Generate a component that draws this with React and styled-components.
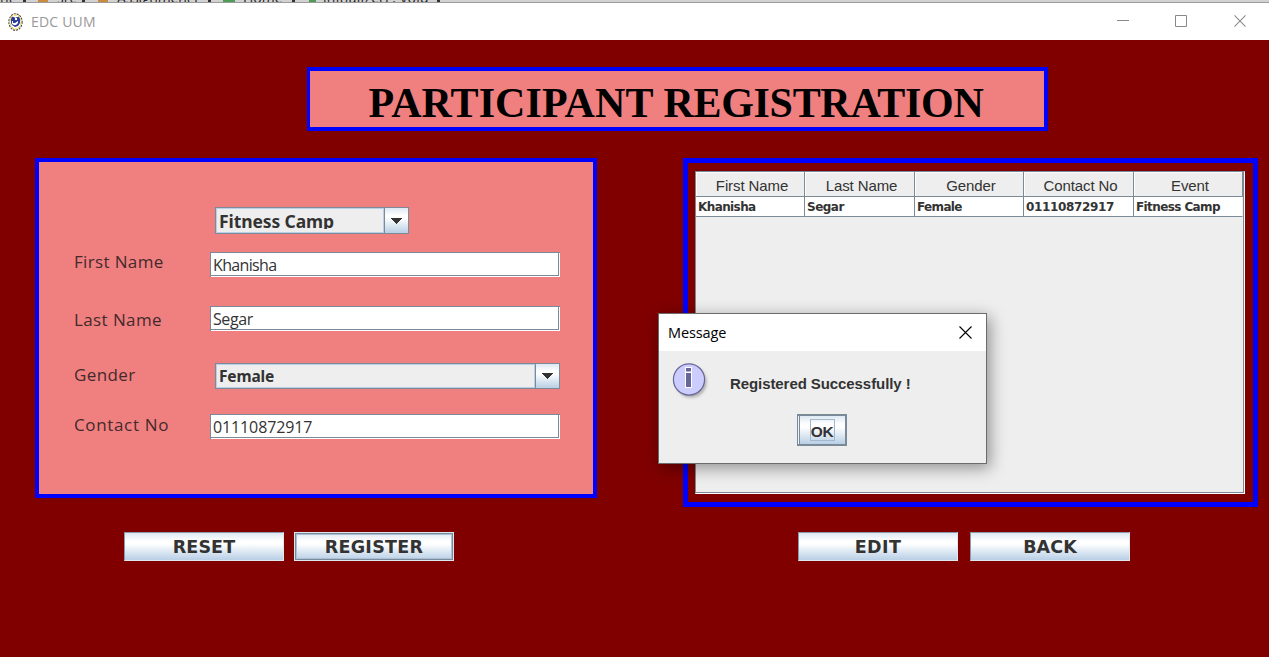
import React from "react";
import styled, { createGlobalStyle, css } from "styled-components";

const Global = createGlobalStyle`
  * { box-sizing: border-box; }
  body { margin: 0; overflow: hidden; background: #800000; }
`;

const ui = `"Open Sans", "Noto Sans", sans-serif`;
const arial = `"Liberation Sans", Arial, sans-serif`;
const bold = `"Noto Sans", Tahoma, sans-serif`;
const verdana = `"DejaVu Sans", Verdana, sans-serif`;

const Window = styled.div`
  width: 1269px;
  height: 657px;
  display: flex;
  flex-direction: column;
  background: #800000;
  color: #333;
  overflow: hidden;
  position: relative;
`;

const Breadcrumb = styled.div`
  height: 3px;
  flex: none;
  display: flex;
  align-items: flex-end;
  overflow: hidden;
  background: #d2d2d2;
  border-bottom: 1px solid #9c9c9c;
`;

const Crumb = styled.span`
  flex: none;
  width: ${(p) => p.$w}px;
  margin-left: ${(p) => p.$gap || 0}px;
  font: 14px/14px ${ui};
  height: 11px;
  color: #222;
  white-space: nowrap;
  letter-spacing: ${(p) => p.$ls || 0}px;
`;

const CrumbMark = styled.span`
  flex: none;
  width: ${(p) => p.$w}px;
  height: 2px;
  margin-left: ${(p) => p.$gap}px;
  background: ${(p) => p.$color};
`;

const TitleBar = styled.header`
  height: 37px;
  flex: none;
  display: flex;
  align-items: center;
  padding: 0 23px 0 8px;
  background: #fff;
`;

const AppTitle = styled.span`
  margin-left: 8px;
  flex: 1;
  font: 14px/20px ${ui};
  letter-spacing: 0.2px;
  color: #999;
`;

const Controls = styled.div`
  display: flex;
  gap: 46px;
`;

const Content = styled.main`
  flex: 1;
  padding: 27px 11px 0 35px;
`;

const Heading = styled.h1`
  width: 741px;
  height: 64px;
  margin: 0 0 27px 272px;
  padding: 5px 0 0 58.5px;
  border: 4px solid #00f;
  border-left-width: 3px;
  background: #f08080;
  color: #000;
  white-space: nowrap;
  font: bold 42px/54px "Liberation Serif", "Times New Roman", serif;
`;

const HeadingWord = styled.span`
  letter-spacing: ${(p) => p.$ls}px;
`;

const Columns = styled.div`
  display: flex;
  justify-content: space-between;
  align-items: flex-start;
  height: 374px;
`;

const FormPanel = styled.section`
  width: 562px;
  height: 340px;
  border: 4px solid #00f;
  background: #f08080;
  padding: 45px 33px 0 35px;
  display: flex;
  flex-direction: column;
`;

const FormRow = styled.div`
  display: flex;
  flex: none;
  height: ${(p) => p.$h}px;
  margin-bottom: ${(p) => p.$gap || 0}px;
`;

const Label = styled.label`
  width: ${(p) => (p.$wide ? 141 : 136)}px;
  flex: none;
  margin-top: ${(p) => p.$top}px;
  font: 17px/20px ${ui};
  letter-spacing: ${(p) => p.$ls}px;
  white-space: nowrap;
  color: #44292b;
`;

const Input = styled.div`
  width: 350px;
  height: 25px;
  background: #fff;
  border: solid #7a8a99;
  border-width: 1px 0 0 1px;
  padding: 0 1px 1px 0;
`;

const InputText = styled.div`
  height: 23px;
  border: solid #7a8a99;
  border-width: 0 1px 1px 0;
  padding-left: 2px;
  font: 16px/25px ${ui};
  letter-spacing: ${(p) => p.$ls}px;
`;

const Combo = styled.div`
  width: ${(p) => p.$w}px;
  height: ${(p) => p.$h}px;
  display: flex;
  border: 1px solid #7a8a99;
  background: #eee;
`;

const ComboValue = styled.div`
  flex: 1;
  padding-left: 2px;
  border: 1px solid #b8cfe5;
  font: bold ${(p) => p.$size}px/${(p) => p.$lh}px ${bold};
  letter-spacing: ${(p) => p.$ls}px;
  white-space: nowrap;
`;

const ComboClip = styled.div`
  height: 20px;
  overflow: hidden;
`;

const metal = css`
  background: linear-gradient(#dde8f3 0%, #fff 30%, #fff 40%, #b8cfe5 100%);
`;

const ComboArrow = styled.div`
  width: 24px;
  border-left: 1px solid #7a8a99;
  display: flex;
  align-items: center;
  padding-left: 5px;
  ${metal}
`;

const TablePanel = styled.section`
  width: 575px;
  height: 349px;
  border: 5px solid #00f;
  padding: 8px 8px 8px 7px;
`;

const TableView = styled.div`
  height: 323px;
  width: 550px;
  background: #eee;
  border: 1px solid #7a8a99;
  border-right-color: #fff;
  border-bottom-color: #fff;
  box-shadow: inset -1px -1px #7a8a99;
`;

const TableRow = styled.div`
  display: grid;
  grid-template-columns: 109px 110px 109px 110px 109px;
  width: 547px;
`;

const HeadCell = styled.div`
  height: 25px;
  border: solid #7a8a99;
  border-width: 0 1px 1px 0;
  box-shadow: inset 1px 1px #fff;
  text-align: center;
  padding-left: 4px;
  font: 15px/28px ${arial};
  letter-spacing: -0.1px;
`;

const Cell = styled.div`
  height: 20px;
  padding-left: 2px;
  background: #fff;
  border: solid #7a8a99;
  border-width: 0 1px 1px 0;
  font: bold 12px/20px ${verdana};
  letter-spacing: ${(p) => p.$ls}px;
  white-space: nowrap;

  &:last-child {
    border-right-color: #eee;
  }
`;

const Actions = styled.div`
  display: flex;
  padding-left: 89px;
`;

const Button = styled.button`
  width: 160px;
  height: 29px;
  margin: 0 ${(p) => p.$after}px 0 0;
  padding: 1px 0 0;
  border: 1px solid #8b9aaa;
  border-right-color: #dfe6ec;
  border-bottom-color: #dfe6ec;
  color: #333;
  font: bold 17.5px/26px ${verdana};
  letter-spacing: ${(p) => p.$ls}px;
  ${metal}
  ${(p) =>
    p.$focused &&
    css`
      border-color: #dce6ef;
      box-shadow: inset 0 0 0 1px #7a8a99, inset 0 0 0 2px #a9c1d9;
    `}
`;

const Dialog = styled.div`
  position: absolute;
  left: 658px;
  top: 313px;
  width: 329px;
  height: 151px;
  border: 1px solid #6b6b6b;
  background: #eee;
  box-shadow: 3px 4px 15px rgba(0, 0, 0, 0.4);
`;

const DialogTitle = styled.div`
  height: 37px;
  padding: 0 14px 0 9px;
  display: flex;
  align-items: center;
  justify-content: space-between;
  background: #fff;
  color: #000;
  font: 14.5px/20px ${ui};
  letter-spacing: -0.1px;
`;

const DialogBody = styled.div`
  display: flex;
  padding: 10px 0 0 12px;
  height: 63px;
`;

const DialogText = styled.div`
  margin: 13px 0 0 19px;
  font: bold 15px/20px ${arial};
  letter-spacing: -0.08px;
`;

const OkButton = styled.button`
  display: flex;
  align-items: center;
  justify-content: center;
  width: 50px;
  height: 32px;
  margin: 0 0 0 138px;
  padding: 0 0 0 1px;
  color: #333;
  border: 2px solid #7a8a99;
  border-left-width: 1px;
  box-shadow: inset 1px 0 #eef3f8, inset 2px 0 #7a8a99;
  ${metal}
`;

const OkLabel = styled.span`
  width: 25px;
  height: 22px;
  border: 1px solid #a3b8cc;
  font: bold 15.5px/24px ${arial};
  letter-spacing: -0.3px;
  text-align: center;
`;

const Arrow = () => (
  <svg width="12" height="6" viewBox="0 0 12 6" shapeRendering="crispEdges">
    <path d="M0 0H12L6 6Z" fill="#333" />
  </svg>
);

const Crest = () => (
  <svg width="15" height="18" viewBox="0 0 15 18">
    <ellipse cx="7.5" cy="9" rx="6.6" ry="8.2" fill="#fff" stroke="#35354a" strokeWidth="1.1" strokeDasharray="2 1" />
    <ellipse cx="7.5" cy="9" rx="5.6" ry="7.1" fill="none" stroke="#e0cc50" strokeWidth="1.2" strokeDasharray="3 1" />
    <path d="M3 6L4 4H6L7 5L9 4H11L12 6V10L10 13L7 14L4 12L3 10Z" fill="#2c3e9b" />
    <path d="M7 5H9V7H7ZM4 8H5V10H7L10 8V10L8 12H6L4 11Z" fill="#fff" />
  </svg>
);

const InfoIcon = () => (
  <svg width="40" height="40" viewBox="0 0 40 40">
    <defs>
      <filter id="soft" x="-20%" y="-20%" width="150%" height="150%">
        <feGaussianBlur stdDeviation="1.4" />
      </filter>
    </defs>
    <circle cx="20" cy="21" r="15.5" fill="#888" opacity=".65" filter="url(#soft)" />
    <circle cx="18" cy="18.5" r="15.6" fill="#ccf" stroke="#669" strokeWidth="1.2" />
    <path d="M14 6H21V27H14Z" fill="#fff" />
    <path d="M15 7H20V10.5H15ZM15 12H20V26H15Z" fill="#669" />
  </svg>
);

const Cross = ({ color, size }) => (
  <svg width={size} height={size} viewBox="0 0 13 13">
    <path d="M.5.5L12.5 12.5M12.5.5L.5 12.5" stroke={color} strokeWidth="1.1" />
  </svg>
);

const headers = ["First Name", "Last Name", "Gender", "Contact No", "Event"];
const record = [
  ["Khanisha", -0.6],
  ["Segar", -0.5],
  ["Female", -0.65],
  ["01110872917", -0.35],
  ["Fitness Camp", -0.6],
];

export default function App() {
  return (
    <Window>
      <Global />
      <Breadcrumb>
        <Crumb $w={16}>nt</Crumb>
        <CrumbMark $gap={7} $w={3} $color="#333" />
        <CrumbMark $gap={12} $w={10} $color="#c98b3c" />
        <Crumb $gap={9} $w={18}>src</Crumb>
        <CrumbMark $gap={7} $w={3} $color="#333" />
        <CrumbMark $gap={13} $w={10} $color="#c98b3c" />
        <Crumb $gap={9} $w={84} $ls={-0.2}>Assignment (</Crumb>
        <CrumbMark $gap={7} $w={3} $color="#333" />
        <CrumbMark $gap={12} $w={12} $color="#4e9a57" />
        <Crumb $gap={8} $w={42}>Home</Crumb>
        <CrumbMark $gap={7} $w={3} $color="#333" />
        <CrumbMark $gap={14} $w={7} $color="#4e9a57" />
        <Crumb $gap={7} $w={108} $ls={0.3}>initialize() : void</Crumb>
        <CrumbMark $gap={6} $w={3} $color="#333" />
      </Breadcrumb>
      <TitleBar>
        <Crest />
        <AppTitle>EDC UUM</AppTitle>
        <Controls>
          <svg width="12" height="13" viewBox="0 0 12 13"><path d="M0 5.5H12" stroke="#888" /></svg>
          <svg width="13" height="13" viewBox="0 0 13 13"><path d="M.5.5H11.5V11.5H.5Z" fill="none" stroke="#888" /></svg>
          <Cross color="#888" size={12} />
        </Controls>
      </TitleBar>
      <Content>
        <Heading>
          <HeadingWord $ls={0.1}>PARTICIPANT </HeadingWord>
          <HeadingWord $ls={-0.3}>REGISTRATION</HeadingWord>
        </Heading>
        <Columns>
          <FormPanel>
            <FormRow $h={27} $gap={18}>
              <Label $wide />
              <Combo $w={194} $h={27}>
                <ComboValue $size={17.5} $lh={25} $ls={-0.1}>
                  <ComboClip>Fitness Camp</ComboClip>
                </ComboValue>
                <ComboArrow><Arrow /></ComboArrow>
              </Combo>
            </FormRow>
            <FormRow $h={25} $gap={29}>
              <Label $top={0} $ls={0.35}>First Name</Label>
              <Input><InputText $ls={-0.65}>Khanisha</InputText></Input>
            </FormRow>
            <FormRow $h={25} $gap={32}>
              <Label $top={4} $ls={0.4}>Last Name</Label>
              <Input><InputText $ls={-0.4}>Segar</InputText></Input>
            </FormRow>
            <FormRow $h={26} $gap={25}>
              <Label $wide $top={2} $ls={0.4}>Gender</Label>
              <Combo $w={345} $h={26}>
                <ComboValue $size={15.5} $lh={23} $ls={-0.15}>Female</ComboValue>
                <ComboArrow><Arrow /></ComboArrow>
              </Combo>
            </FormRow>
            <FormRow $h={25}>
              <Label $top={1} $ls={0.65}>Contact No</Label>
              <Input><InputText $ls={-0.12}>01110872917</InputText></Input>
            </FormRow>
          </FormPanel>
          <TablePanel>
            <TableView>
              <TableRow>{headers.map((h) => <HeadCell key={h}>{h}</HeadCell>)}</TableRow>
              <TableRow>{record.map(([v, ls]) => <Cell key={v} $ls={ls}>{v}</Cell>)}</TableRow>
            </TableView>
          </TablePanel>
        </Columns>
        <Actions>
          <Button $after={10} $ls={0.1}>RESET</Button>
          <Button $after={344} $ls={0.3} $focused>REGISTER</Button>
          <Button $after={12} $ls={0.4}>EDIT</Button>
          <Button $after={0} $ls={0.1}>BACK</Button>
        </Actions>
      </Content>
      <Dialog>
        <DialogTitle>
          <span>Message</span>
          <Cross color="#000" size={13} />
        </DialogTitle>
        <DialogBody>
          <InfoIcon />
          <DialogText>Registered Successfully !</DialogText>
        </DialogBody>
        <OkButton><OkLabel>OK</OkLabel></OkButton>
      </Dialog>
    </Window>
  );
}
